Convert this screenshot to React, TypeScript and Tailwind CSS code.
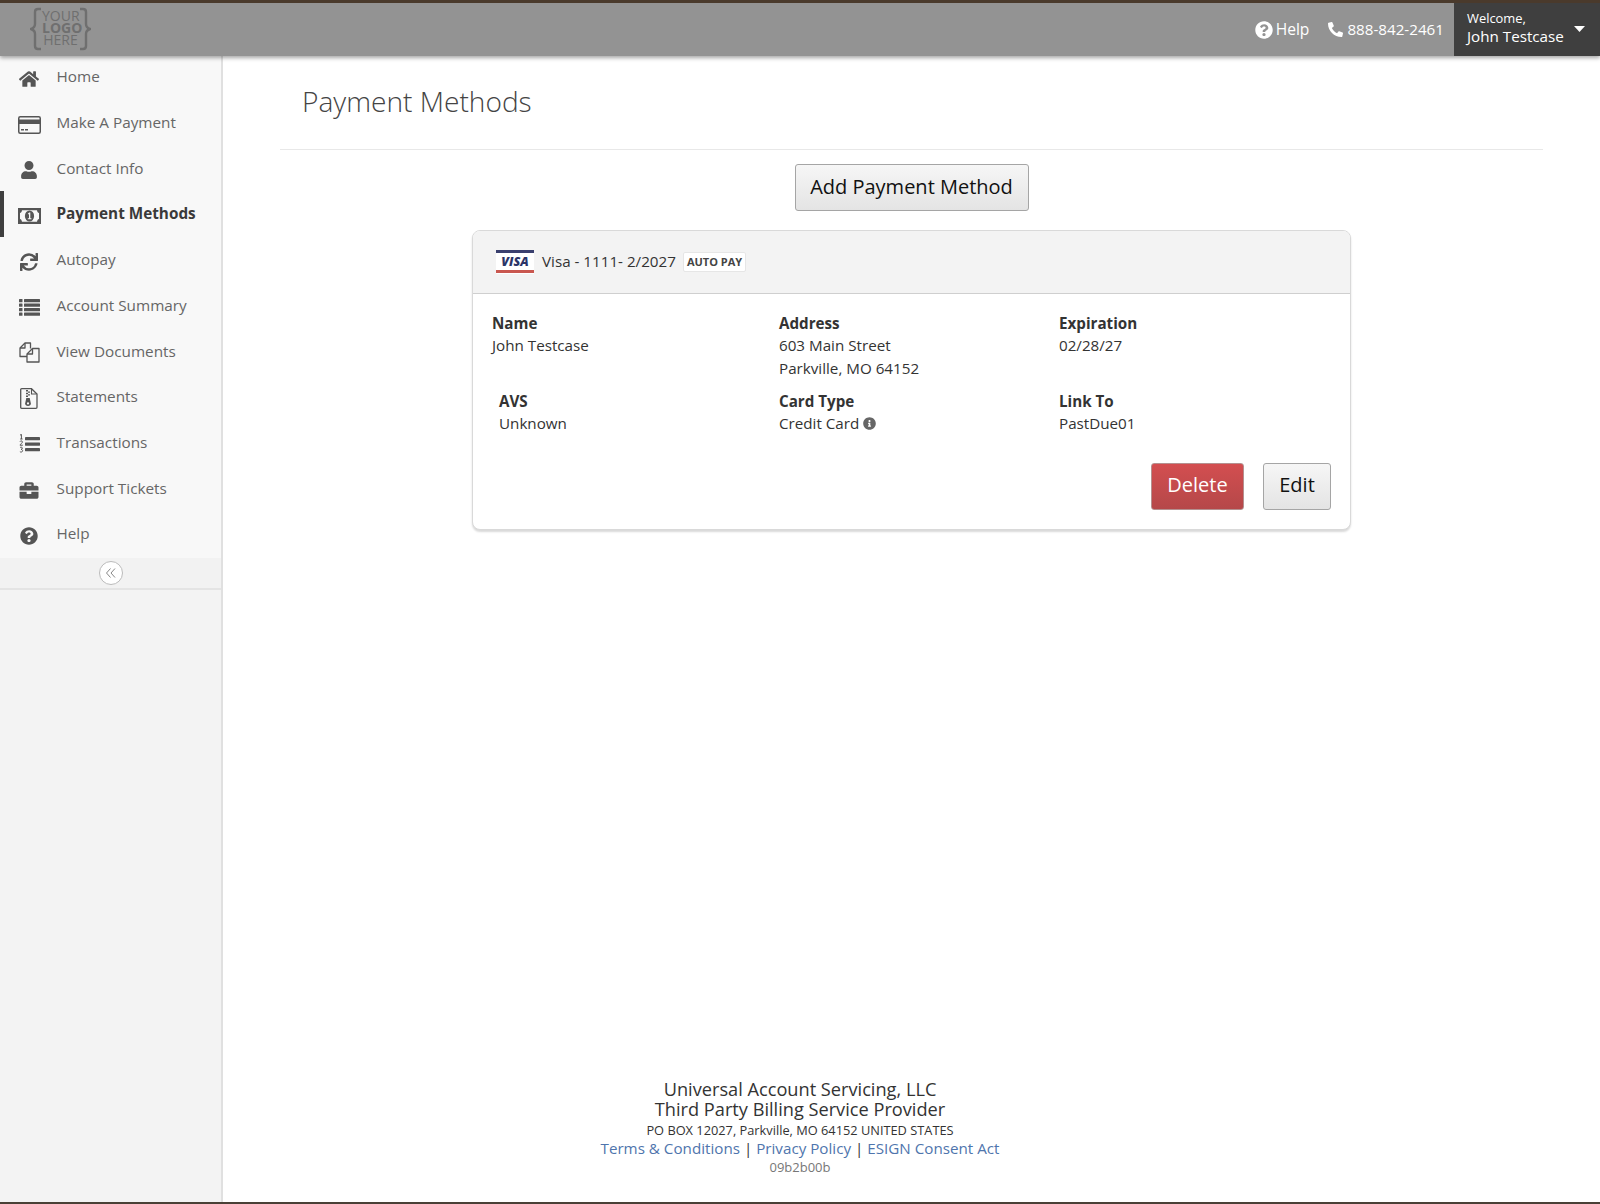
import React from "react";
import { FaHome, FaUser, FaSync, FaBriefcase, FaQuestionCircle, FaPhone, FaInfoCircle } from "react-icons/fa";

type IconProps = { className?: string };

const CardIcon = ({ className }: IconProps) => (
  <svg viewBox="0 0 23 18" className={className}>
    <rect x="0.75" y="0.75" width="21.5" height="16.5" rx="1.5" fill="none" stroke="currentColor" strokeWidth="1.5" />
    <rect x="1" y="3.5" width="21" height="4.5" fill="currentColor" />
    <rect x="3" y="13" width="3" height="1.5" fill="currentColor" />
    <rect x="7" y="13" width="3" height="1.5" fill="currentColor" />
  </svg>
);
const MoneyIcon = ({ className }: IconProps) => (
  <svg viewBox="0 0 23 16" className={className}>
    <rect width="23" height="16" fill="currentColor" />
    <path d="M4 2.2H19C19.3 4 20 4.7 21 5V11C20 11.3 19.3 12 19 13.8H4C3.7 12 3 11.3 2 11V5C3 4.7 3.7 4 4 2.2Z" fill="#f8f8f8" />
    <ellipse cx="11.5" cy="8" rx="4.6" ry="5.6" fill="currentColor" />
    <path d="M9.8 11.2H13.4V10.2H12.3V4.6H11.2L9.8 5.8L10.4 6.6L11 6.1V10.2H9.8Z" fill="#f8f8f8" />
  </svg>
);
const ListIcon = ({ className }: IconProps) => (
  <svg viewBox="0 0 21 17" className={className} fill="currentColor">
    {[0, 4.5, 9, 13.5].map((y) => (
      <g key={y}>
        <rect x="0" y={y} width="3.5" height="3.3" rx="0.5" />
        <rect x="5" y={y} width="16" height="3.3" rx="0.5" />
      </g>
    ))}
  </svg>
);
const DocsIcon = ({ className }: IconProps) => (
  <svg viewBox="0 0 21 21" className={className} fill="none" stroke="currentColor" strokeWidth="1.3" strokeLinejoin="round">
    <path d="M8 14.5H1V6L6 1H11.5V6.5" />
    <path d="M6 1V6H1" />
    <path d="M13.5 6.5H20V20H8V12Z" />
    <path d="M13.5 6.5V12H8" />
  </svg>
);
const ZipIcon = ({ className }: IconProps) => (
  <svg viewBox="0 0 18 21" className={className}>
    <path d="M1.7 0.7H11.5L17 6V19.3C17 20 16.6 20.3 16 20.3H1.7C1 20.3 0.7 20 0.7 19.3V1.7C0.7 1 1 0.7 1.7 0.7Z" fill="none" stroke="currentColor" strokeWidth="1.3" />
    <path d="M11.5 1V6H16.7" fill="none" stroke="currentColor" strokeWidth="1.1" />
    <path d="M6 2H8V3.4H6ZM8 3.4H10V4.8H8ZM6 4.8H8V6.2H6ZM8 6.2H10V7.6H8ZM6 7.6H8V9H6Z" fill="currentColor" />
    <path d="M6.3 10H9.7L10.8 15.2C11 17 9.7 18 8 18C6.3 18 5 17 5.2 15.2Z" fill="currentColor" />
    <circle cx="8" cy="15.4" r="1.1" fill="#f8f8f8" />
  </svg>
);
const ListOlIcon = ({ className }: IconProps) => (
  <svg viewBox="0 0 21 20" className={className}>
    <rect x="6" y="3" width="15" height="3.2" rx="0.4" fill="currentColor" />
    <rect x="6" y="8.5" width="15" height="3.2" rx="0.4" fill="currentColor" />
    <rect x="6" y="14" width="15" height="3.2" rx="0.4" fill="currentColor" />
    <path d="M1 1.2L2.4 0.3V5M1.2 5H3.6M1 7.6C1.4 6.6 3.4 6.6 3.4 8C3.4 9 1.4 10 1 11.2H3.8M1 13.6C1.6 13 3.4 13 3.4 14.2C3.4 15 2.6 15.2 2 15.4C2.8 15.4 3.6 15.8 3.6 16.7C3.6 18.2 1.6 18.4 0.9 17.6" fill="none" stroke="currentColor" strokeWidth="1" />
  </svg>
);

const items: [string, React.ComponentType<IconProps>, string, boolean?][] = [
  ["Home", FaHome, "w-[20px] h-[18px]"],
  ["Make A Payment", CardIcon, "w-[23px] h-[18px]"],
  ["Contact Info", FaUser, "w-[16px] h-[18px]"],
  ["Payment Methods", MoneyIcon, "w-[23px] h-[16px]", true],
  ["Autopay", FaSync, "w-[18px] h-[18px]"],
  ["Account Summary", ListIcon, "w-[21px] h-[17px]"],
  ["View Documents", DocsIcon, "w-[21px] h-[21px]"],
  ["Statements", ZipIcon, "w-[18px] h-[21px]"],
  ["Transactions", ListOlIcon, "w-[21px] h-[20px]"],
  ["Support Tickets", FaBriefcase, "w-[22px] h-[19px]"],
  ["Help", FaQuestionCircle, "w-[18px] h-[18px]"],
];

function Field({ label, lines, className = "" }: { label: string; lines: React.ReactNode[]; className?: string }) {
  return (
    <div className={className}>
      <div className="font-bold text-[#333] leading-[22px]">{label}</div>
      {lines.map((l, i) => (
        <div key={i} className="leading-[23px] text-[#333]">{l}</div>
      ))}
    </div>
  );
}

export default function App() {
  return (
    <div className="w-[1600px] h-[1204px] flex flex-col bg-white border-b-2 border-[#4a4036] overflow-hidden text-[15.2px] text-[#333]" style={{ fontFamily: '"Open Sans", sans-serif' }}>
      <header className="relative z-10 h-[56px] shrink-0 flex items-stretch justify-between bg-[#939393] border-t-[3px] border-[#4a3a2c] shadow-[0_2px_4px_rgba(0,0,0,0.35)]">
        <div className="flex items-start pl-[30px] pt-[4px] text-[#6f6f6f]">
          <svg width="12" height="44" viewBox="0 0 12 44" fill="none" stroke="#6f6f6f" strokeWidth="2.4">
            <path d="M11 2H8C6 2 5 3 5 5V17C5 19 4 21 1 22C4 23 5 25 5 27V39C5 41 6 42 8 42H11" />
          </svg>
          <div className="w-[37px] text-center text-[14px] leading-[12px] font-normal pt-[3px]">
            <div>YOUR</div>
            <div className="font-bold">LOGO</div>
            <div>HERE</div>
          </div>
          <svg width="12" height="44" viewBox="0 0 12 44" fill="none" stroke="#6f6f6f" strokeWidth="2.4">
            <path d="M1 2H4C6 2 7 3 7 5V17C7 19 8 21 11 22C8 23 7 25 7 27V39C7 41 6 42 4 42H1" />
          </svg>
        </div>
        <div className="flex items-stretch">
          <div className="flex items-center text-white mr-[10px]">
            <FaQuestionCircle className="w-[18px] h-[18px] mr-[3px]" />
            <span className="mr-[19px] text-[15.6px]">Help</span>
            <FaPhone className="w-[15px] h-[15px] mr-[4px] -scale-x-100" />
            <span>888-842-2461</span>
          </div>
          <div className="w-[146px] bg-[#3f3f3f] text-white pl-[13px] flex flex-col justify-center relative pb-[3px]">
            <div className="text-[12.9px] leading-[17px]">Welcome,</div>
            <div className="text-[15.2px] leading-[19px]">John Testcase</div>
            <svg viewBox="0 0 11 6" className="absolute right-[15px] top-[23px] w-[11px] h-[6px]">
              <path d="M0 0H11L5.5 6Z" fill="#fff" />
            </svg>
          </div>
        </div>
      </header>

      <div className="flex-1 flex min-h-0">
        <aside className="w-[223px] shrink-0 bg-[#f3f3f3] border-r-2 border-[#e0e0e0] flex flex-col">
          <nav className="bg-[#f8f8f8] -mt-[2px] pb-[1.5px]">
            {items.map(([label, Icon, size, active]) => (
              <div key={label} className={`h-[45.7px] flex items-center border-l-[4px] ${active ? "border-[#3f3f3f] font-bold text-[#3a3a3a]" : "border-transparent text-[#666]"}`}>
                <span className="w-[22px] ml-[14px] mr-[16.5px] mt-[4px] flex justify-center">
                  <Icon className={`${size} shrink-0 text-[#555]`} />
                </span>
                <span className="text-[15.3px]">{label}</span>
              </div>
            ))}
          </nav>
          <div className="h-[32px] flex items-center justify-center bg-[#f2f2f2] border-b-2 border-[#e4e4e4]">
            <div className="w-[24px] h-[24px] rounded-full bg-white border border-[#bbb] flex items-center justify-center">
              <svg viewBox="0 0 12 12" className="w-[12px] h-[12px]" fill="none" stroke="#888" strokeWidth="1">
                <path d="M5.5 1.5L1.5 6L5.5 10.5M10 1.5L6 6L10 10.5" />
              </svg>
            </div>
          </div>
        </aside>

        <main className="flex-1 flex flex-col min-w-0">
          <div className="ml-[57px] mr-[57px] h-[94px] border-b border-[#e8e8e8] pl-[22px] pt-[23px]">
            <h1 className="text-[28.1px] leading-[44px] font-light text-[#444]">Payment Methods</h1>
          </div>
          <div className="flex justify-center mt-[14px]">
            <button className="h-[47px] w-[234px] pb-[2px] rounded-[3px] border border-[#a5a5a5] bg-gradient-to-b from-[#f6f6f6] to-[#e4e4e4] text-[20px] text-[#111]">Add Payment Method</button>
          </div>
          <div className="mx-auto mt-[19px] w-[879px] h-[300px] rounded-[8px] border border-[#d9d9d9] shadow-[0_2px_2px_rgba(0,0,0,0.15)] bg-white overflow-hidden">
            <div className="h-[63px] bg-[#f3f3f3] border-b border-[#cfcfcf] flex items-center pl-[23px]">
              <svg width="38" height="24" viewBox="0 0 38 24" className="mr-[8px]">
                <rect width="38" height="24" fill="#fff" />
                <rect width="38" height="3" fill="#3a3f6e" />
                <rect y="20" width="38" height="3" fill="#c9574f" />
                <text x="19" y="16" textAnchor="middle" fontSize="12.5" fontWeight="800" fontStyle="italic" fill="#2b3467" fontFamily="Open Sans, sans-serif">VISA</text>
              </svg>
              <span className="pb-[2px]">Visa - 1111- 2/2027</span>
              <span className="ml-[7px] h-[20px] px-[3px] bg-white rounded-[2px] border border-[#e6e6e6] text-[11px] font-bold text-[#444] flex items-center">AUTO PAY</span>
            </div>
            <div className="pl-[19px] pt-[18px] pr-[19px]">
              <div className="grid grid-cols-[287px_280px_1fr]">
                <Field label="Name" lines={["John Testcase"]} />
                <Field label="Address" lines={["603 Main Street", "Parkville, MO 64152"]} />
                <Field label="Expiration" lines={["02/28/27"]} />
              </div>
              <div className="grid grid-cols-[287px_280px_1fr] mt-[10px]">
                <Field label="AVS" lines={["Unknown"]} className="pl-[7px]" />
                <Field label="Card Type" lines={[<span className="flex items-center">Credit Card<FaInfoCircle className="ml-[4px] w-[13px] h-[13px] text-[#666]" /></span>]} />
                <Field label="Link To" lines={["PastDue01"]} />
              </div>
              <div className="flex justify-end gap-[19px] mt-[28px]">
                <button className="w-[93px] h-[47px] pb-[3px] rounded-[3px] border border-[#b5908f] bg-gradient-to-b from-[#d34e50] to-[#b54849] text-white text-[20px]">Delete</button>
                <button className="w-[68px] h-[47px] pb-[3px] rounded-[3px] border border-[#a5a5a5] bg-gradient-to-b from-[#f6f6f6] to-[#e4e4e4] text-[#111] text-[20px]">Edit</button>
              </div>
            </div>
          </div>
          <footer className="mt-auto mr-[223px] mb-[25px] text-center text-[#333]">
            <div className="text-[18.2px] leading-[20px]">Universal Account Servicing, LLC</div>
            <div className="text-[18.2px] leading-[20px]">Third Party Billing Service Provider</div>
            <div className="text-[12.8px] leading-[20px] mt-[1px]">PO BOX 12027, Parkville, MO 64152 UNITED STATES</div>
            <div className="text-[15.2px] leading-[17px]">
              <span className="text-[#4f75ad]">Terms &amp; Conditions</span> | <span className="text-[#4f75ad]">Privacy Policy</span> | <span className="text-[#4f75ad]">ESIGN Consent Act</span>
            </div>
            <div className="text-[13px] leading-[20px] text-[#777]">09b2b00b</div>
          </footer>
        </main>
      </div>
    </div>
  );
}
